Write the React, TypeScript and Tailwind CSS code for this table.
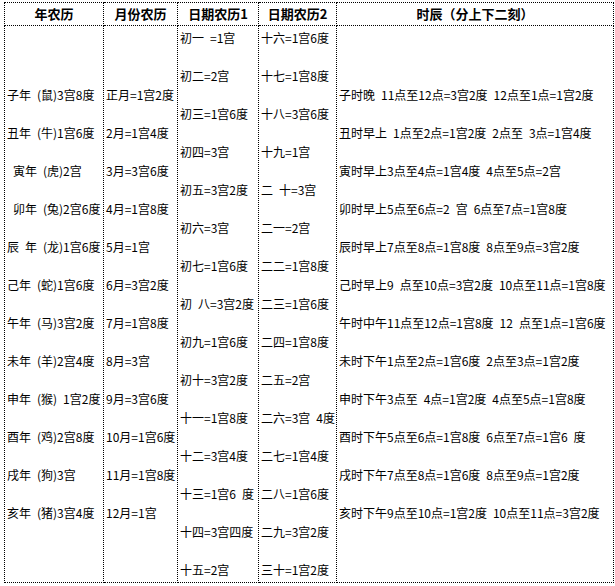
import React from "react";

const col1 = [
  "子年 (鼠)3宫8度",
  "丑年 (牛)1宫6度",
  " 寅年 (虎)2宫",
  " 卯年 (兔)2宫6度",
  "辰 年 (龙)1宫6度",
  "己年 (蛇)1宫6度",
  "午年 (马)3宫2度",
  "未年 (羊)2宫4度",
  "申年 (猴) 1宫2度",
  "酉年 (鸡)2宫8度",
  "戌年 (狗)3宫",
  "亥年 (猪)3宫4度",
];

const col2 = [
  "正月=1宫2度",
  "2月=1宫4度",
  "3月=3宫6度",
  "4月=1宫8度",
  "5月=1宫",
  "6月=3宫2度",
  "7月=1宫8度",
  "8月=3宫",
  "9月=3宫6度",
  "10月=1宫6度",
  "11月=1宫8度",
  "12月=1宫",
];

const col3 = [
  "初一 =1宫",
  "初二=2宫",
  "初三=1宫6度",
  "初四=3宫",
  "初五=3宫2度",
  "初六=3宫",
  "初七=1宫6度",
  "初 八=3宫2度",
  "初九=1宫6度",
  "初十=3宫2度",
  "十一=1宫8度",
  "十二=3宫4度",
  "十三=1宫6 度",
  "十四=3宫四度",
  "十五=2宫",
];

const col4 = [
  "十六=1宫6度",
  "十七=1宫8度",
  "十八=3宫6度",
  "十九=1宫",
  "二 十=3宫",
  "二一=2宫",
  "二二=1宫8度",
  "二三=1宫6度",
  "二四=1宫8度",
  "二五=2宫",
  "二六=3宫 4度",
  "二七=1宫4度",
  "二八=1宫6度",
  "二九=3宫2度",
  "三十=1宫2度",
];

const col5 = [
  "子时晚 11点至12点=3宫2度 12点至1点=1宫2度",
  "丑时早上 1点至2点=1宫2度 2点至 3点=1宫4度",
  "寅时早上3点至4点=1宫4度 4点至5点=2宫",
  "卯时早上5点至6点=2 宫 6点至7点=1宫8度",
  "辰时早上7点至8点=1宫8度 8点至9点=3宫2度",
  "己时早上9 点至10点=3宫2度 10点至11点=1宫8度",
  "午时中午11点至12点=1宫8度 12 点至1点=1宫6度",
  "未时下午1点至2点=1宫6度 2点至3点=1宫2度",
  "申时下午3点至 4点=1宫2度 4点至5点=1宫8度",
  "酉时下午5点至6点=1宫8度 6点至7点=1宫6 度",
  "戌时下午7点至8点=1宫6度 8点至9点=1宫2度",
  "亥时下午9点至10点=1宫2度 10点至11点=3宫2度",
];

function Cell({ items }: { items: string[] }) {
  return (
    <td className="border border-dotted border-black align-middle p-0 pl-[2px]">
      <div className="flex flex-col gap-[24px]">
        {items.map((t, i) => (
          <div key={i} className="h-[14px] leading-[14px] whitespace-pre">
            {t.replace(/ /g, "\u2002")}
          </div>
        ))}
      </div>
    </td>
  );
}

export default function App() {
  const th = "border border-dotted border-black h-[23px] p-0 text-center font-bold text-[13px] leading-[14px]";
  return (
    <div
      className="bg-white w-[615px] h-[586px] pt-[2px] pl-[4px] text-black text-[12px]"
      style={{ fontFamily: '"Noto Sans CJK SC", "Liberation Sans", sans-serif' }}
    >
      <table className="border-collapse table-fixed w-[609px]">
        <colgroup>
          <col className="w-[99px]" />
          <col className="w-[74px]" />
          <col className="w-[81px]" />
          <col className="w-[78px]" />
          <col className="w-[277px]" />
        </colgroup>
        <thead>
          <tr>
            <th className={th}>年农历</th>
            <th className={th}>月份农历</th>
            <th className={th}>日期农历1</th>
            <th className={th}>日期农历2</th>
            <th className={th}>时辰（分上下二刻）</th>
          </tr>
        </thead>
        <tbody>
          <tr className="h-[557px]">
            <Cell items={col1} />
            <Cell items={col2} />
            <Cell items={col3} />
            <Cell items={col4} />
            <Cell items={col5} />
          </tr>
        </tbody>
      </table>
    </div>
  );
}
